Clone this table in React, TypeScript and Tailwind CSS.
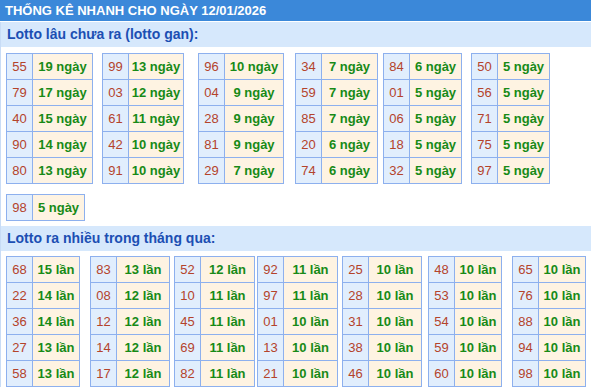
type Row = [string, string]

type Box = { cls: string; rows: Row[] }

const ganBoxes: Box[] = [
  { cls: 'ml-[5px] w-[87px]', rows: [['55', '19 ngày'], ['79', '17 ngày'], ['40', '15 ngày'], ['90', '14 ngày'], ['80', '13 ngày']] },
  { cls: 'ml-[9px] w-[82px]', rows: [['99', '13 ngày'], ['03', '12 ngày'], ['61', '11 ngày'], ['42', '10 ngày'], ['91', '10 ngày']] },
  { cls: 'ml-[14px] w-[86px]', rows: [['96', '10 ngày'], ['04', '9 ngày'], ['28', '9 ngày'], ['81', '9 ngày'], ['29', '7 ngày']] },
  { cls: 'ml-[11px] w-[83px]', rows: [['34', '7 ngày'], ['59', '7 ngày'], ['85', '7 ngày'], ['20', '6 ngày'], ['74', '6 ngày']] },
  { cls: 'ml-[5px] w-[79px]', rows: [['84', '6 ngày'], ['01', '5 ngày'], ['06', '5 ngày'], ['18', '5 ngày'], ['32', '5 ngày']] },
  { cls: 'ml-[9px] w-[79px]', rows: [['50', '5 ngày'], ['56', '5 ngày'], ['71', '5 ngày'], ['75', '5 ngày'], ['97', '5 ngày']] },
]

const monthBoxes: Box[] = [
  { cls: 'ml-[5px] w-[74px]', rows: [['68', '15 lần'], ['22', '14 lần'], ['36', '14 lần'], ['27', '13 lần'], ['58', '13 lần']] },
  { cls: 'ml-[10px] w-[80px]', rows: [['83', '13 lần'], ['08', '12 lần'], ['12', '12 lần'], ['14', '12 lần'], ['17', '12 lần']] },
  { cls: 'ml-[4px] w-[81px]', rows: [['52', '12 lần'], ['10', '11 lần'], ['45', '11 lần'], ['69', '11 lần'], ['82', '11 lần']] },
  { cls: 'ml-[2px] w-[81px]', rows: [['92', '11 lần'], ['97', '11 lần'], ['01', '10 lần'], ['13', '10 lần'], ['21', '10 lần']] },
  { cls: 'ml-[4px] w-[80px]', rows: [['25', '10 lần'], ['28', '10 lần'], ['31', '10 lần'], ['38', '10 lần'], ['46', '10 lần']] },
  { cls: 'ml-[6px] w-[74px]', rows: [['48', '10 lần'], ['53', '10 lần'], ['54', '10 lần'], ['59', '10 lần'], ['60', '10 lần']] },
  { cls: 'ml-[10px] w-[74px]', rows: [['65', '10 lần'], ['76', '10 lần'], ['88', '10 lần'], ['94', '10 lần'], ['98', '10 lần']] },
]

function StatBox({ box }: { box: Box }) {
  return (
    <div className={`flex flex-col shrink-0 border-t border-l border-[#8db0ee] ${box.cls}`}>
      {box.rows.map(([num, val]) => (
        <div key={num} className="flex h-[26px] border-b border-[#8db0ee]">
          <div className="w-[26px] shrink-0 flex items-center justify-center border-r border-[#8db0ee] bg-[#e1eefd] text-[13px] text-[#b4432b]">
            {num}
          </div>
          <div className="flex-1 flex items-center justify-center border-r border-[#8db0ee] bg-[#fef3e2] text-[13px] font-bold text-[#178a17]">
            {val}
          </div>
        </div>
      ))}
    </div>
  )
}

function SectionTitle({ children }: { children: string }) {
  return (
    <div className="h-[25px] pl-[6px] bg-[#d6e8fc] text-[14px] font-bold leading-[25px] text-[#1c4fb3]">
      {children}
    </div>
  )
}

export default function App() {
  return (
    <div className="w-[591px] h-[389px] overflow-hidden bg-white font-['Liberation_Sans',Arial,sans-serif]">
      <div className="h-[21px] pl-[5px] bg-[#3b88d9] text-[13px] font-bold leading-[21px] text-white">
        THỐNG KÊ NHANH CHO NGÀY 12/01/2026
      </div>
      <div className="mt-px border-l border-[#c8dcf6]">
        <SectionTitle>Lotto lâu chưa ra (lotto gan):</SectionTitle>
        <div className="flex mt-[6px]">
          {ganBoxes.map((b, i) => (
            <StatBox key={i} box={b} />
          ))}
        </div>
        <div className="flex mt-[10px]">
          <StatBox box={{ cls: 'ml-[5px] w-[79px]', rows: [['98', '5 ngày']] }} />
        </div>
        <div className="mt-[5px]">
          <SectionTitle>Lotto ra nhiều trong tháng qua:</SectionTitle>
        </div>
        <div className="flex mt-[5px]">
          {monthBoxes.map((b, i) => (
            <StatBox key={i} box={b} />
          ))}
        </div>
      </div>
    </div>
  )
}
